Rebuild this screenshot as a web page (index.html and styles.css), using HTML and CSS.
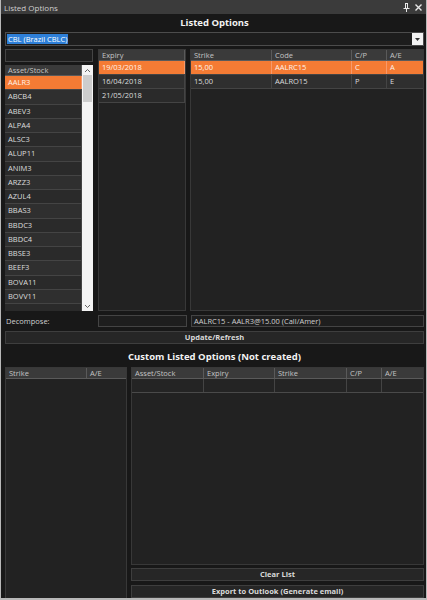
FILE: index.html
```html
<!DOCTYPE html>
<html lang="en">
<head>
    <meta charset="UTF-8">
    <title>Listed Options</title>
    <link rel="stylesheet" href="styles.css">
</head>
<body>
    <div class="window">
        <div class="titlebar">
            <span>Listed Options</span>
            <div class="title-icons">
                <svg width="7" height="9" viewBox="0 0 7 9"><path d="M2 0h3v5h1.5v1h-2.5v3h-1v-3h-2.5v-1h1.5z M3 1v4h1v-4z" fill="#e8e8e8"/></svg>
                <svg width="7" height="7" viewBox="0 0 7 7"><path d="M0.5 0.5l6 6M6.5 0.5l-6 6" stroke="#e8e8e8" stroke-width="1.4"/></svg>
            </div>
        </div>

        <div class="content">
            <h1>Listed Options</h1>

            <div class="combo">
                <span class="combo-text"><span class="sel">CBL (Brazil CBLC)</span></span>
                <span class="combo-btn">
                    <svg width="5" height="3" viewBox="0 0 5 3"><path d="M0 0h5l-2.5 3z" fill="#333"/></svg>
                </span>
            </div>

            <div class="top">
                <div class="col-assets">
                    <div class="search"></div>
                    <div class="asset-list">
                        <div class="list-body">
                            <div class="grid-head"><div class="cell">Asset/Stock</div></div>
                            <div class="row selected"><div class="cell">AALR3</div></div>
                            <div class="row"><div class="cell">ABCB4</div></div>
                            <div class="row"><div class="cell">ABEV3</div></div>
                            <div class="row"><div class="cell">ALPA4</div></div>
                            <div class="row"><div class="cell">ALSC3</div></div>
                            <div class="row"><div class="cell">ALUP11</div></div>
                            <div class="row"><div class="cell">ANIM3</div></div>
                            <div class="row"><div class="cell">ARZZ3</div></div>
                            <div class="row"><div class="cell">AZUL4</div></div>
                            <div class="row"><div class="cell">BBAS3</div></div>
                            <div class="row"><div class="cell">BBDC3</div></div>
                            <div class="row"><div class="cell">BBDC4</div></div>
                            <div class="row"><div class="cell">BBSE3</div></div>
                            <div class="row"><div class="cell">BEEF3</div></div>
                            <div class="row"><div class="cell">BOVA11</div></div>
                            <div class="row"><div class="cell">BOVV11</div></div>
                            <div class="row"><div class="cell"></div></div>
                        </div>
                        <div class="scrollbar">
                            <div class="sb-arrow">
                                <svg width="5" height="3" viewBox="0 0 5 3"><path d="M0 3L2.5 0.5L5 3" fill="none" stroke="#555" stroke-width="0.9"/></svg>
                            </div>
                            <div class="sb-thumb"></div>
                            <div class="sb-track"></div>
                            <div class="sb-arrow">
                                <svg width="5" height="3" viewBox="0 0 5 3"><path d="M0 0L2.5 2.5L5 0" fill="none" stroke="#555" stroke-width="0.9"/></svg>
                            </div>
                        </div>
                    </div>
                </div>

                <div class="grid expiry">
                    <div class="grid-head"><div class="cell">Expiry</div></div>
                    <div class="row selected"><div class="cell">19/03/2018</div></div>
                    <div class="row"><div class="cell">16/04/2018</div></div>
                    <div class="row"><div class="cell">21/05/2018</div></div>
                </div>

                <div class="grid strikes">
                    <div class="grid-head">
                        <div class="cell c-strike">Strike</div>
                        <div class="cell c-code">Code</div>
                        <div class="cell c-cp">C/P</div>
                        <div class="cell c-ae">A/E</div>
                    </div>
                    <div class="row selected">
                        <div class="cell c-strike">15,00</div>
                        <div class="cell c-code">AALRC15</div>
                        <div class="cell c-cp">C</div>
                        <div class="cell c-ae">A</div>
                    </div>
                    <div class="row">
                        <div class="cell c-strike">15,00</div>
                        <div class="cell c-code">AALRO15</div>
                        <div class="cell c-cp">P</div>
                        <div class="cell c-ae">E</div>
                    </div>
                </div>
            </div>

            <div class="decompose">
                <span class="label">Decompose:</span>
                <div class="field small"></div>
                <div class="field wide">AALRC15 - AALR3@15.00 (Call/Amer)</div>
            </div>

            <div class="btn">Update/Refresh</div>

            <h2>Custom Listed Options (Not created)</h2>

            <div class="bottom">
                <div class="grid custom-left">
                    <div class="grid-head">
                        <div class="cell l-strike">Strike</div>
                        <div class="cell l-ae">A/E</div>
                    </div>
                </div>

                <div class="custom-right">
                    <div class="grid custom-grid">
                        <div class="grid-head">
                            <div class="cell r-asset">Asset/Stock</div>
                            <div class="cell r-expiry">Expiry</div>
                            <div class="cell r-strike">Strike</div>
                            <div class="cell r-cp">C/P</div>
                            <div class="cell r-ae">A/E</div>
                        </div>
                        <div class="row empty">
                            <div class="cell r-asset"></div>
                            <div class="cell r-expiry"></div>
                            <div class="cell r-strike"></div>
                            <div class="cell r-cp"></div>
                            <div class="cell r-ae"></div>
                        </div>
                    </div>
                    <div class="btn">Clear List</div>
                    <div class="btn">Export to Outlook (Generate email)</div>
                </div>
            </div>
        </div>
    </div>
</body>
</html>
```

FILE: styles.css
```css
body {
    margin: 0;
    padding: 0;
    background-color: #b8b8b8;
    font-family: "Open Sans", "Noto Sans", sans-serif;
    font-size: 7.5px;
    color: #d8d8d8;
}

.window {
    width: 425px;
    height: 598px;
    margin-left: 1px;
    background-color: #181818;
    display: flex;
    flex-direction: column;
    overflow: hidden;
}

.titlebar {
    height: 14px;
    background-color: #3b3b3b;
    display: flex;
    align-items: center;
    justify-content: space-between;
    padding: 0 4px 0 3px;
    font-size: 8px;
    color: #cfcfcf;
    flex-shrink: 0;
}

.title-icons {
    display: flex;
    align-items: center;
    gap: 5px;
}

.content {
    flex: 1;
    display: flex;
    flex-direction: column;
    padding: 0 2px 0 4px;
    min-height: 0;
}

h1, h2 {
    margin: 0;
    text-align: center;
    font-weight: bold;
    color: #f2f2f2;
    font-size: 9.5px;
}

h1 {
    height: 18px;
    line-height: 17px;
}

h2 {
    height: 22px;
    line-height: 24px;
    margin-top: 1px;
}

.combo {
    height: 14px;
    border: 1px solid #4c4c4c;
    box-sizing: border-box;
    display: flex;
    background-color: #1d1d1d;
}

.combo-text {
    flex: 1;
    padding: 1px 1px;
    line-height: 10px;
}

.combo-text .sel {
    background-color: #2e7fd8;
    color: #fff;
    padding: 0 1px;
    display: inline-block;
    height: 10px;
}

.combo-btn {
    width: 11px;
    background-color: #f2f2f2;
    display: flex;
    align-items: center;
    justify-content: center;
}

.top {
    display: flex;
    margin-top: 3px;
    height: 262px;
    gap: 4px;
}

.col-assets {
    width: 88px;
    display: flex;
    flex-direction: column;
    margin-right: 1px;
}

.search {
    height: 13px;
    border: 1px solid #454545;
    box-sizing: border-box;
    background-color: #1f1f1f;
    margin-bottom: 3px;
}

.asset-list {
    flex: 1;
    display: flex;
    overflow: hidden;
}

.list-body {
    flex: 1;
    overflow: hidden;
    background-color: #222;
}

.list-body .row {
    height: 14.25px;
}

.scrollbar {
    width: 11px;
    background-color: #f4f4f4;
    display: flex;
    flex-direction: column;
}

.sb-arrow {
    height: 10px;
    display: flex;
    align-items: center;
    justify-content: center;
}

.sb-thumb {
    height: 27px;
    margin: 0 1px;
    background-color: #cdcdcd;
}

.sb-track {
    flex: 1;
}

.grid {
    border: 1px solid #383838;
    background-color: #222;
    box-sizing: border-box;
}

.grid-head {
    display: flex;
    height: 11px;
    background-color: #3a3a3a;
    border-bottom: 1px solid #5a5a5a;
    box-sizing: border-box;
}

.grid-head .cell {
    border-right: 1px solid #5a5a5a;
    color: #c4c4c4;
    line-height: 10px;
}

.row {
    display: flex;
    height: 14px;
    background-color: #2a2a2a;
    border-bottom: 1px solid #444;
    box-sizing: border-box;
}

.row:nth-child(odd) {
    background-color: #2f2f2f;
}

.row .cell {
    border-right: 1px solid #444;
    line-height: 13px;
    color: #dcdcdc;
}

.cell {
    flex: 1;
    padding-left: 3px;
    box-sizing: border-box;
    white-space: nowrap;
    overflow: hidden;
}

.row.selected {
    background-color: #f47b34;
}

.row.selected .cell {
    color: #fff3ea;
    border-right-color: #f7996a;
}

.expiry {
    width: 88px;
}

.strikes {
    flex: 1;
}

.c-strike { flex: 0 0 81px; }
.c-code { flex: 0 0 80px; }
.c-cp { flex: 0 0 35px; }
.c-ae { flex: 1; border-right: none !important; }

.decompose {
    display: flex;
    align-items: center;
    height: 15px;
    margin-top: 2px;
    gap: 4px;
}

.decompose .label {
    width: 88px;
    padding-left: 1px;
    color: #cfcfcf;
}

.field {
    height: 12px;
    border: 1px solid #444;
    box-sizing: border-box;
    background-color: #1e1e1e;
    line-height: 10px;
    padding-left: 2px;
    color: #cfcfcf;
}

.field.small {
    width: 89px;
}

.field.wide {
    flex: 1;
}

.btn {
    height: 13px;
    border: 1px solid #3e3e3e;
    box-sizing: border-box;
    background-color: #262626;
    text-align: center;
    font-weight: bold;
    color: #dadada;
    line-height: 11px;
    margin-top: 3px;
}

.bottom {
    flex: 1;
    display: flex;
    gap: 4px;
    min-height: 0;
}

.custom-left {
    width: 122px;
    border-bottom: none;
}

.l-strike { flex: 0 0 81px; }
.l-ae { flex: 1; border-right: none !important; }

.custom-right {
    flex: 1;
    display: flex;
    flex-direction: column;
}

.custom-grid {
    flex: 1;
}

.r-asset { flex: 0 0 72px; }
.r-expiry { flex: 0 0 71px; }
.r-strike { flex: 0 0 72px; }
.r-cp { flex: 0 0 35px; }
.r-ae { flex: 1; border-right: none !important; }

.row.empty {
    background-color: #242424;
    border-bottom: 1px solid #4a4a4a;
}

.custom-right .btn:last-child {
    margin-top: 4px;
}
```
